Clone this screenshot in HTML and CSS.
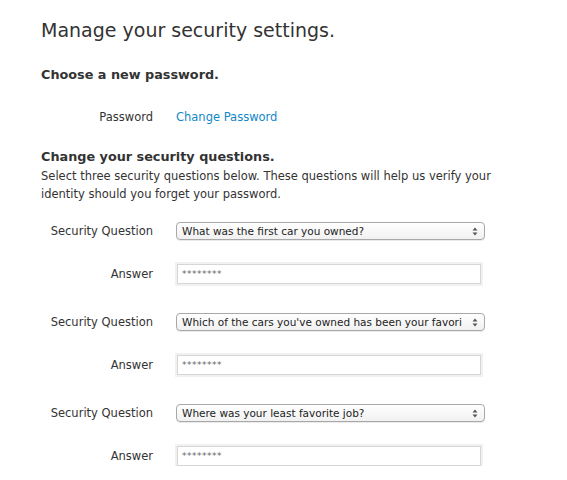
FILE: index.html
```html
<!DOCTYPE html>
<html>
<head>
<meta charset="utf-8">
<link rel="stylesheet" href="styles.css">
</head>
<body>
<div class="page">
  <h1 class="title">Manage your security settings.</h1>

  <section class="block">
    <h2 class="heading">Choose a new password.</h2>
    <div class="row pw-row">
      <span class="label">Password</span>
      <a class="link" href="#">Change Password</a>
    </div>
  </section>

  <section class="block">
    <h2 class="heading">Change your security questions.</h2>
    <p class="desc">Select three security questions below. These questions will help us verify your identity should you forget your password.</p>

    <div class="qgroup">
      <div class="row">
        <span class="label">Security Question</span>
        <div class="select"><span class="select-text">What was the first car you owned?</span><span class="arrows"><svg width="6" height="9" viewBox="0 0 6 9"><path d="M3 0.5 L5.5 3.5 L0.5 3.5 Z M3 8.5 L5.5 5.5 L0.5 5.5 Z" fill="#555"/></svg></span></div>
      </div>
      <div class="row answer-row">
        <span class="label">Answer</span>
        <div class="input">********</div>
      </div>
    </div>

    <div class="qgroup">
      <div class="row">
        <span class="label">Security Question</span>
        <div class="select"><span class="select-text">Which of the cars you've owned has been your favori</span><span class="arrows"><svg width="6" height="9" viewBox="0 0 6 9"><path d="M3 0.5 L5.5 3.5 L0.5 3.5 Z M3 8.5 L5.5 5.5 L0.5 5.5 Z" fill="#555"/></svg></span></div>
      </div>
      <div class="row answer-row">
        <span class="label">Answer</span>
        <div class="input">********</div>
      </div>
    </div>

    <div class="qgroup">
      <div class="row">
        <span class="label">Security Question</span>
        <div class="select"><span class="select-text">Where was your least favorite job?</span><span class="arrows"><svg width="6" height="9" viewBox="0 0 6 9"><path d="M3 0.5 L5.5 3.5 L0.5 3.5 Z M3 8.5 L5.5 5.5 L0.5 5.5 Z" fill="#555"/></svg></span></div>
      </div>
      <div class="row answer-row">
        <span class="label">Answer</span>
        <div class="input">********</div>
      </div>
    </div>
  </section>
</div>
</body>
</html>
```

FILE: styles.css
```css
html, body {
  margin: 0;
  padding: 0;
  background: #fff;
}
body {
  font-family: "DejaVu Sans", "Liberation Sans", sans-serif;
  color: #333;
  font-size: 11.5px;
}
.page {
  padding: 18px 0 0 41px;
}
.title {
  margin: 0;
  font-size: 19px;
  font-weight: normal;
  line-height: 24px;
  color: #333;
}
.heading {
  margin: 0;
  font-size: 12.8px;
  font-weight: bold;
  line-height: 18px;
  color: #333;
}
.block:first-of-type {
  margin-top: 24px;
}
.block + .block {
  margin-top: 22px;
}
.row {
  display: flex;
  align-items: center;
}
.label {
  width: 112px;
  text-align: right;
  margin-right: 23px;
  flex: none;
}
.pw-row {
  margin-top: 24px;
  height: 18px;
}
.link {
  color: #0f87c8;
  text-decoration: none;
}
.desc {
  margin: 1px 0 0;
  line-height: 18px;
  width: 470px;
}
.qgroup {
  margin-top: 29px;
}
.desc + .qgroup {
  margin-top: 19px;
}
.select {
  width: 302px;
  height: 16px;
  border: 1px solid #a8a8a8;
  border-radius: 4px;
  background: linear-gradient(#ffffff, #f1f1f1);
  display: flex;
  align-items: center;
  justify-content: space-between;
  padding: 0 0 0 5px;
  box-sizing: content-box;
  font-size: 10.5px;
  color: #222;
  box-shadow: 0 1px 0 rgba(0,0,0,0.08);
}
.select-text {
  white-space: nowrap;
}
.arrows {
  display: flex;
  align-items: center;
  padding: 0 6px 0 4px;
}
.answer-row {
  margin-top: 24px;
}
.answer-row .label {
  margin-right: 22px;
}
.input {
  width: 298px;
  height: 18px;
  border: 1px solid #d6d6d6;
  box-shadow: 0 0 0 2px #f1f1f1;
  margin-left: 2px;
  background: #fff;
  font-size: 9px;
  color: #666;
  line-height: 18px;
  padding-left: 4px;
  letter-spacing: 0.5px;
}
```
